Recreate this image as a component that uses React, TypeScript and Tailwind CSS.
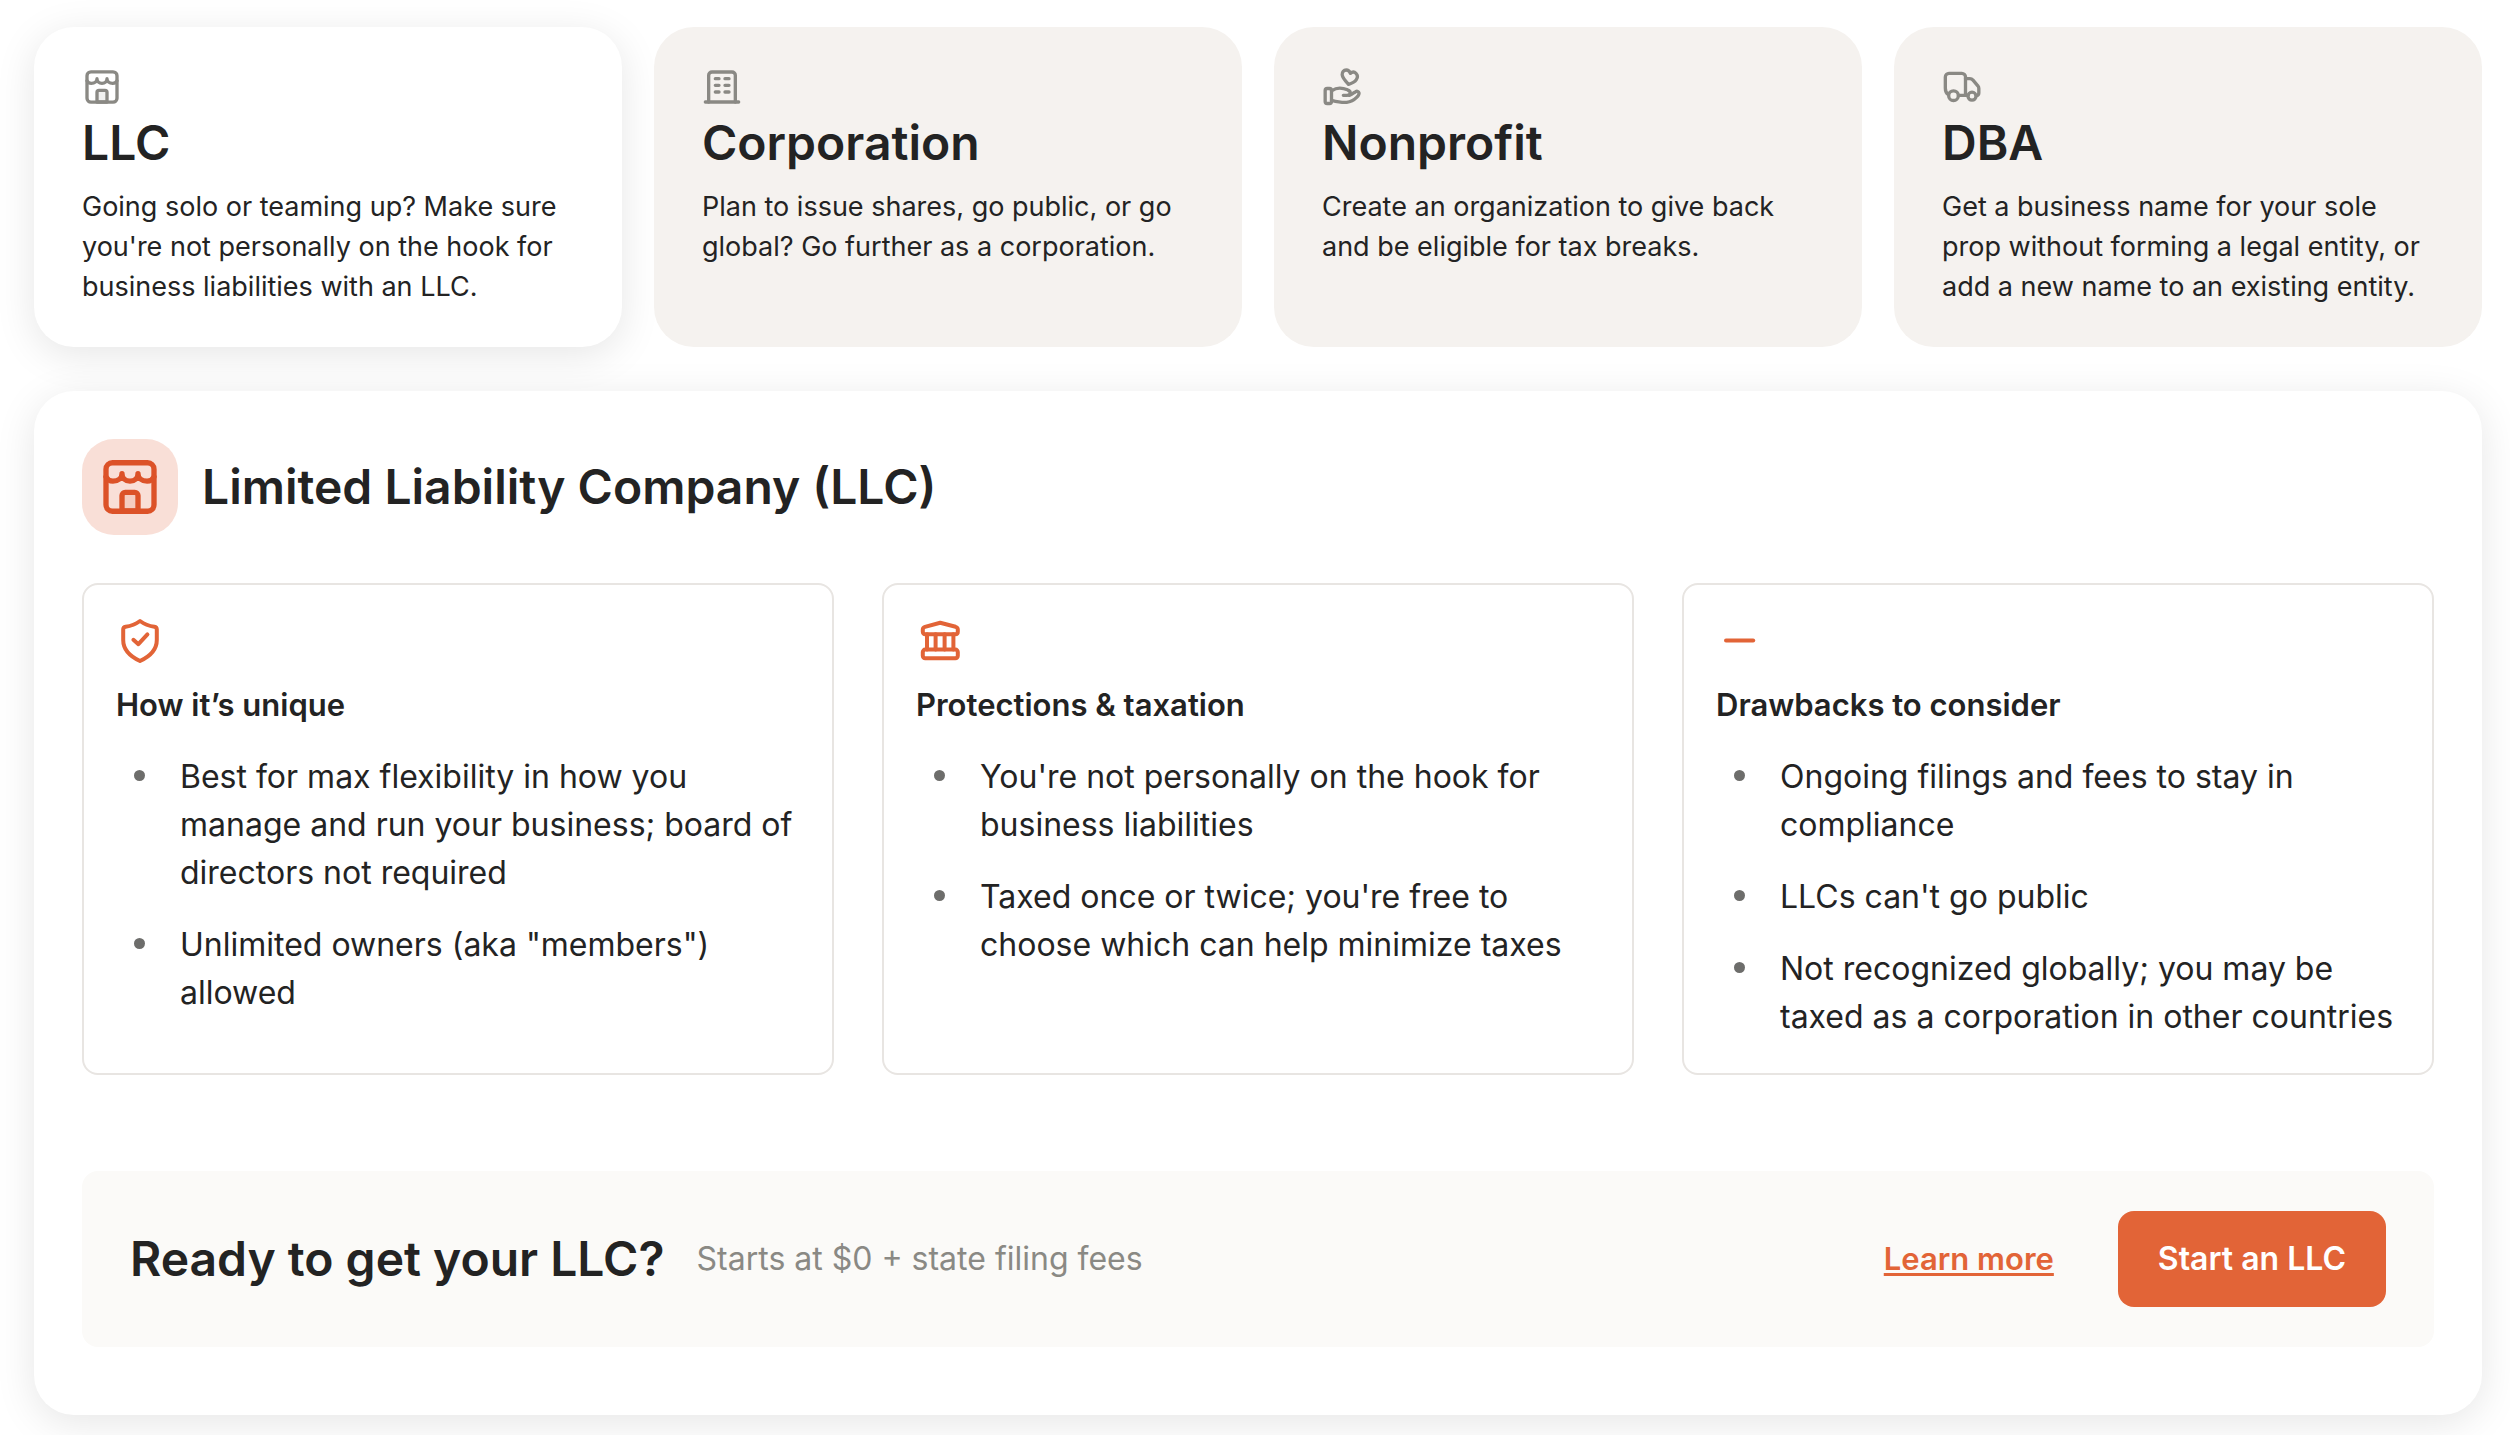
import { useState } from "react";
import type { ReactNode } from "react";

// Icons
interface IconProps {
  className?: string;
}

function Icon({
  className = "",
  children,
}: IconProps & { children: ReactNode }) {
  return (
    <svg
      viewBox="0 0 24 24"
      fill="none"
      stroke="currentColor"
      strokeWidth="2"
      strokeLinecap="round"
      strokeLinejoin="round"
      aria-hidden="true"
      className={className}
    >
      {children}
    </svg>
  );
}

function StoreIcon({ className }: IconProps) {
  return (
    <Icon className={className}>
      <path
        d="M9 21v-5.8a1.2 1.2 0 0 1 1.2-1.2h3.6a1.2 1.2 0 0 1 1.2 1.2V21z"
        fill="currentColor"
        fillOpacity="0.12"
      />
      <rect x="3" y="2.9" width="18" height="18.2" rx="2.4" />
      <path d="M3 8.2c.5 1 1.4 1.6 2.6 1.6C7.6 9.8 9 8.6 9 7c0 1.6 1.3 2.8 3 2.8S15 8.600 15 7c0 1.6 1.4 2.8 3.4 2.8 1.2 0 2.1-.6 2.6-1.6" />
    </Icon>
  );
}

function BuildingIcon({ className }: IconProps) {
  return (
    <Icon className={className}>
      <path d="M4 21V5a2 2 0 0 1 2-2h12a2 2 0 0 1 2 2v16" />
      <path d="M2 21h20" />
      <path d="M8 7h2.2M13.8 7h2.4M8 11h2.2M13.8 11h2.4M8 15h2.2M13.8 15h2.4" />
    </Icon>
  );
}

function GivingIcon({ className }: IconProps) {
  return (
    <Icon className={className}>
      <rect x="1.9" y="12.9" width="3.8" height="9" rx="1.2" />
      <path d="M15.9 10.4C14 8.4 12.2 6.4 12.1 4.6c-.1-1.7 1-2.8 2.4-2.8 1.3 0 2.1.7 2.5 2 1-.8 2.4-1 3.4 0 1 1 1 2.6.2 3.8-.9 1.4-2.6 2.2-4.7 2.8z" />
      <path d="M5.7 14.3c1.6-1 3.2-1.6 5-1.6 2 0 3.4.5 4.6 1 1.3.5 1.8 1.3 1.6 2.1-.2.9-1 1.2-2 1.2h-2.1" />
      <path d="M16.4 17c1.5-.4 2.8-1.7 3.8-2.2.9-.5 1.8-.1 2 .7.2.8-.5 1.8-1.4 2.7-1.8 1.8-3.6 2.7-6 3-2.6.3-5.2-.2-9.1-1.2" />
    </Icon>
  );
}

function TruckIcon({ className }: IconProps) {
  return (
    <Icon className={className}>
      <path d="M3.8 16.6C2.5 15.8 2 14.6 2 12.8V6a2.2 2.2 0 0 1 2.2-2.2h7.7A2.2 2.2 0 0 1 14.1 6v11" />
      <path d="M14.1 7h2.6c.8 0 1.4.3 1.9.9l2.9 3.4c.4.5.6 1 .6 1.6v2.7c0 .8-.5 1.4-1.3 1.6M9.9 17h5.7" />
      <circle cx="6.9" cy="17.2" r="2.9" />
      <circle cx="18" cy="17.5" r="2.4" />
    </Icon>
  );
}

function ShieldIcon({ className }: IconProps) {
  return (
    <Icon className={className}>
      <path d="M12 2c2.2 1.6 4.6 2.5 7.2 2.9.7.1 1.2.7 1.2 1.4v5.2c0 4.6-3 8-8.4 10.5-5.4-2.5-8.4-5.9-8.4-10.5V6.3c0-.7.5-1.3 1.2-1.4C7.4 4.5 9.8 3.6 12 2z" />
      <path d="M8.7 11.4l2.5 2.2 4.5-4.9" />
    </Icon>
  );
}

function BankIcon({ className }: IconProps) {
  return (
    <Icon className={className}>
      <path d="M12.1 2.9l7.7 2c.7.2 1.1.7 1.1 1.4v1.1c0 .7-.5 1.2-1.2 1.2H4.6c-.7 0-1.2-.5-1.2-1.2V6.3c0-.7.4-1.2 1.1-1.4z" />
      <path d="M5.5 8.6v7.7M9.8 8.6v7.7M14.3 8.6v7.7M18.7 8.6v7.7" />
      <rect x="3.4" y="16.3" width="17.5" height="4.3" rx="1.2" />
    </Icon>
  );
}

function MinusIcon({ className }: IconProps) {
  return (
    <Icon className={className}>
      <path d="M5 11.8h13.6" />
    </Icon>
  );
}

const entities = [
  {
    id: "llc",
    name: "LLC",
    icon: StoreIcon,
    description:
      "Going solo or teaming up? Make sure you're not personally on the hook for business liabilities with an LLC.",
  },
  {
    id: "corporation",
    name: "Corporation",
    icon: BuildingIcon,
    description:
      "Plan to issue shares, go public, or go global? Go further as a corporation.",
  },
  {
    id: "nonprofit",
    name: "Nonprofit",
    icon: GivingIcon,
    description:
      "Create an organization to give back and be eligible for tax breaks.",
  },
  {
    id: "dba",
    name: "DBA",
    icon: TruckIcon,
    description:
      "Get a business name for your sole prop without forming a legal entity, or add a new name to an existing entity.",
  },
];

const facts = [
  {
    title: "How it’s unique",
    icon: ShieldIcon,
    items: [
      "Best for max flexibility in how you manage and run your business; board of directors not required",
      'Unlimited owners (aka "members") allowed',
    ],
  },
  {
    title: "Protections & taxation",
    icon: BankIcon,
    items: [
      "You're not personally on the hook for business liabilities",
      "Taxed once or twice; you're free to choose which can help minimize taxes",
    ],
  },
  {
    title: "Drawbacks to consider",
    icon: MinusIcon,
    items: [
      "Ongoing filings and fees to stay in compliance",
      "LLCs can't go public",
      "Not recognized globally; you may be taxed as a corporation in other countries",
    ],
  },
];

// Entity Tab Component
interface EntityTabProps {
  entity: (typeof entities)[number];
  selected: boolean;
  onSelect: () => void;
}

function EntityTab({ entity, selected, onSelect }: EntityTabProps) {
  const stateClass = selected
    ? "bg-white shadow-[0_8px_40px_rgba(0,0,0,0.1)]"
    : "bg-[#f5f2ef]";

  return (
    <button
      type="button"
      role="tab"
      aria-selected={selected}
      onClick={onSelect}
      className={`flex flex-col items-start rounded-[40px] px-12 py-10 text-left ${stateClass}`}
    >
      <entity.icon className="size-10 text-[#8a8984]" />
      <span className="mb-2 text-5xl leading-[72px] font-semibold">
        {entity.name}
      </span>
      <span className="text-[27px] leading-10">{entity.description}</span>
    </button>
  );
}

// Fact Card Component
function FactCard({ fact }: { fact: (typeof facts)[number] }) {
  return (
    <section className="rounded-2xl border-2 border-[#e8e5e2] p-8">
      <fact.icon className="size-12 text-[#e26437]" />
      <h3 className="mt-4 text-[31px] leading-[48px] font-semibold">
        {fact.title}
      </h3>
      <ul className="mt-6 flex flex-col gap-6">
        {fact.items.map((item) => (
          <li key={item} className="flex text-[32px] leading-[48px]">
            <span className="flex h-11 w-16 shrink-0 items-center pl-[18px]">
              <span className="size-[11px] rounded-full bg-[#6d6d6b]" />
            </span>
            <span>{item}</span>
          </li>
        ))}
      </ul>
    </section>
  );
}

export default function App() {
  const [selected, setSelected] = useState("llc");

  return (
    <main className="bg-white pt-[27px] pr-7 pb-5 pl-[34px] font-['Inter',sans-serif] text-[#232323]">
      <div role="tablist" aria-label="Entity type" className="grid grid-cols-4 gap-8">
        {entities.map((entity) => (
          <EntityTab
            key={entity.id}
            entity={entity}
            selected={entity.id === selected}
            onSelect={() => setSelected(entity.id)}
          />
        ))}
      </div>

      <div
        role="tabpanel"
        aria-label="Limited Liability Company (LLC)"
        className="mt-11 rounded-[40px] bg-white px-12 pt-12 pb-[68px] shadow-[0_8px_40px_rgba(0,0,0,0.1)]"
      >
        <div className="flex items-center gap-6">
          <div className="flex size-24 items-center justify-center rounded-[32px] bg-[#f9dfd7]">
            <StoreIcon className="size-16 text-[#dc5228]" />
          </div>
          <h2 className="text-5xl leading-[72px] font-semibold">
            Limited Liability Company (LLC)
          </h2>
        </div>

        <div className="mt-12 grid grid-cols-3 gap-12">
          {facts.map((fact) => (
            <FactCard key={fact.title} fact={fact} />
          ))}
        </div>

        <div className="mt-24 flex items-center justify-between rounded-2xl bg-[#fbfaf8] px-12 py-10">
          <div className="flex items-center gap-8">
            <h2 className="text-5xl leading-[72px] font-semibold">
              Ready to get your LLC?
            </h2>
            <p className="text-[32px] leading-[48px] text-[#8a8984]">
              Starts at $0 + state filing fees
            </p>
          </div>
          <div className="flex items-center gap-16">
            <a
              href="#learn-more"
              className="text-[31px] leading-[48px] font-semibold text-[#e26437] underline decoration-[3px] underline-offset-3"
            >
              Learn more
            </a>
            <button
              type="button"
              className="rounded-2xl bg-[#e26437] px-10 py-6 text-[32px] leading-[48px] font-semibold text-white"
            >
              Start an LLC
            </button>
          </div>
        </div>
      </div>
    </main>
  );
}
